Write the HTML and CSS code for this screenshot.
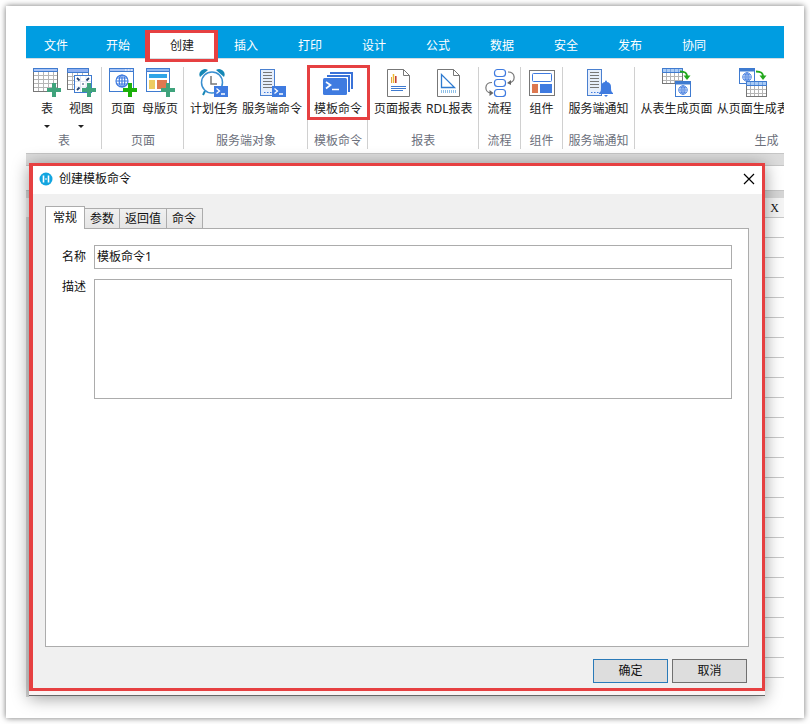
FILE: index.html
```html
<!DOCTYPE html>
<html lang="zh-CN">
<head>
  <meta charset="UTF-8" />
  <title>创建模板命令</title>
  <link rel="stylesheet" href="styles.css">
</head>
<body>
  <!-- shared icon parts -->
  <svg class="sprite" aria-hidden="true">
    <symbol id="plus" viewBox="0 0 14 14">
      <path d="M5 0h4v5h5v4H9v5H5V9H0V5h5z" fill="currentColor"/>
    </symbol>
    <symbol id="terminal" viewBox="0 0 14 11">
      <rect width="14" height="11" fill="#3f7be0"/>
      <path d="M2.500 2.500l3 2.500-3 2.500M7 8h4" fill="none" stroke="#fff" stroke-width="1.300"/>
    </symbol>
    <symbol id="globe" viewBox="0 0 14 14">
      <g fill="none" stroke="#3f7be0" stroke-width="1.200">
        <circle cx="7" cy="7" r="6"/>
        <ellipse cx="7" cy="7" rx="2.800" ry="6"/>
        <path d="M7 1v12M1 7h12M2 4h10M2 10h10"/>
      </g>
    </symbol>
    <symbol id="server" viewBox="0 0 16 28">
      <rect x=".5" y=".5" width="14" height="26" fill="#e6eefb" stroke="#4a80d0"/>
      <path d="M3 3.500h9M3 6.500h9M3 9.500h9M3 12.500h9M3 15.500h9M3 18.500h9" stroke="#777"/>
      <path d="M4 23.500h1.500M7 23.500h1.500M10 23.500h1.500" stroke="#3f7be0"/>
    </symbol>
    <symbol id="grid" viewBox="0 0 22 16">
      <rect x=".5" y=".5" width="20" height="15" fill="#fff" stroke="#777"/>
      <path d="M1 8.500h19M1 12.500h19M4.500 5v10M8.500 5v10M12.500 5v10M16.500 5v10" stroke="#b5b5b5"/>
      <path d="M.5.5h20v4H.5z" fill="#a9cbf5" stroke="#3f7bd0"/>
      <path d="M4.500 1v3M8.500 1v3M12.500 1v3M16.500 1v3" stroke="#3f7bd0" opacity=".5"/>
    </symbol>
    <symbol id="page" viewBox="0 0 17 17">
      <rect x=".5" y=".5" width="15" height="15" fill="#fff" stroke="#3f7bd0"/>
      <path d="M.5.5h15v3H.5z" fill="#3f7bd0"/>
      <use href="#globe" x="3" y="4" width="10" height="10"/>
    </symbol>
  </svg>

  <div class="card">
    <div class="app">
      <nav class="menu">
        <button class="menu-item file">文件</button>
        <button class="menu-item">开始</button>
        <button class="menu-item active">创建</button>
        <button class="menu-item">插入</button>
        <button class="menu-item">打印</button>
        <button class="menu-item">设计</button>
        <button class="menu-item">公式</button>
        <button class="menu-item">数据</button>
        <button class="menu-item">安全</button>
        <button class="menu-item">发布</button>
        <button class="menu-item">协同</button>
      </nav>

      <div class="ribbon">
        <section class="group">
          <div class="tools">
            <button class="tool">
              <svg class="icon green" viewBox="0 0 30 30">
                <rect x="1.500" y="1.500" width="24" height="23" fill="#fff" stroke="#777"/>
                <path d="M2 8.500h23M2 12.500h23M2 16.500h23M2 20.500h23M6.500 5v19M11.500 5v19M16.500 5v19M21.500 5v19" stroke="#b5b5b5"/>
                <path d="M1.500 1.500h24v3h-24z" fill="#a9c4f5" stroke="#3f7bd0"/>
                <use href="#plus" x="15" y="16" width="14" height="14"/>
              </svg>
              <span>表</span>
              <i class="caret"></i>
            </button>
            <button class="tool">
              <svg class="icon green" viewBox="0 0 30 30">
                <rect x="1.500" y="1.500" width="21" height="21" fill="#fff" stroke="#777"/>
                <path d="M2 9.500h20M2 13.500h20M2 17.500h20M6.500 5v17M11.500 5v17M16.500 5v17" stroke="#b5b5b5"/>
                <path d="M1.500 1.500h21v4h-21z" fill="#8fb0f0" stroke="#3f7bd0"/>
                <rect x="8.500" y="8.500" width="17" height="17" fill="#fff" stroke="#3f7bd0"/>
                <path d="M14.500 9v16M20 9v16M9 14.500h16M9 20h16" stroke="#dfe7f5"/>
                <path d="M11 11l2.500 2.500M23 11l-2.500 2.500M11 23l2.500-2.500M23 23l-2.500-2.500" fill="none" stroke="#24406e" stroke-width="1.800"/>
                <path d="M16 17h2" stroke="#24406e"/>
                <use href="#plus" x="16" y="16" width="14" height="14"/>
              </svg>
              <span>视图</span>
              <i class="caret"></i>
            </button>
          </div>
          <h3>表</h3>
        </section>

        <section class="group">
          <div class="tools">
            <button class="tool">
              <svg class="icon bright" viewBox="0 0 30 30">
                <rect x="1.500" y="1.500" width="24" height="23" fill="#fff" stroke="#3f7bd0"/>
                <path d="M1.500 1.500h24v3h-24z" fill="#a9c4f5" stroke="#3f7bd0"/>
                <path d="M17 3h1.500M20 3h1.500M23 3h1.500" stroke="#fff"/>
                <use href="#globe" x="7" y="7" width="14" height="14"/>
                <use href="#plus" x="15" y="16" width="14" height="14"/>
              </svg>
              <span>页面</span>
            </button>
            <button class="tool">
              <svg class="icon green" viewBox="0 0 30 30">
                <rect x="1.500" y="1.500" width="23" height="23" fill="#fff" stroke="#3f7bd0"/>
                <path d="M1.500 1.500h23v3h-23z" fill="#8fb8f0" stroke="#3f7bd0"/>
                <rect x="4" y="7" width="18" height="4" fill="#2fa4e7"/>
                <rect x="4" y="13" width="6" height="9" fill="#edcb62"/>
                <rect x="12" y="13" width="10" height="9" fill="#dd7850"/>
                <use href="#plus" x="16" y="16" width="14" height="14"/>
              </svg>
              <span>母版页</span>
            </button>
          </div>
          <h3>页面</h3>
        </section>

        <section class="group">
          <div class="tools">
            <button class="tool">
              <svg class="icon" viewBox="0 0 30 30">
                <path d="M6 24l-2 4" stroke="#1587b5" stroke-width="2"/>
                <circle cx="13" cy="15.500" r="10.500" fill="#fff" stroke="#3a8fd0" stroke-width="1.500"/>
                <path d="M1 10a5.500 5.500 0 0 1 8-7zM25 10a5.500 5.500 0 0 0-8-7z" fill="#1587b5"/>
                <path d="M12 9v8h6" fill="none" stroke="#777" stroke-width="1.500"/>
                <use href="#terminal" x="15" y="19" width="14" height="11"/>
              </svg>
              <span>计划任务</span>
            </button>
            <button class="tool">
              <svg class="icon" viewBox="0 0 30 30">
                <use href="#server" x="3" y="2" width="16" height="28"/>
                <use href="#terminal" x="15" y="19" width="14" height="11"/>
              </svg>
              <span>服务端命令</span>
            </button>
          </div>
          <h3>服务端对象</h3>
        </section>

        <section class="group">
          <div class="tools">
            <button class="tool marked">
              <svg class="icon" viewBox="0 0 30 30">
                <path d="M7 6h22v16M4 9h22v16" fill="none" stroke="#3a72d8" stroke-width="2"/>
                <rect x="0" y="11" width="24" height="17" rx="1.500" fill="#3f7be0"/>
                <path d="M3 15l4.500 3L3 21.500M9 22.500h7" fill="none" stroke="#fff" stroke-width="1.700"/>
              </svg>
              <span>模板命令</span>
            </button>
          </div>
          <h3>模板命令</h3>
        </section>

        <section class="group">
          <div class="tools">
            <button class="tool">
              <svg class="icon" viewBox="0 0 30 30">
                <path d="M4.500 2.500h16l6 6v21h-22zM20.500 2.500v6h6" fill="#fff" stroke="#777"/>
                <path d="M8.500 10v6" stroke="#e8a33c"/>
                <path d="M10.500 7v9" stroke="#edb830" stroke-width="1.500"/>
                <path d="M12.800 9v7" stroke="#c0392b" stroke-width="1.500"/>
                <path d="M8 19.500h15M8 21.500h15M8 23.500h12" stroke="#3f7bd0" stroke-width="1.200"/>
              </svg>
              <span>页面报表</span>
            </button>
            <button class="tool">
              <svg class="icon" viewBox="0 0 30 30">
                <path d="M3.500 2.500h16l6 6v21h-22zM19.500 2.500v6h6" fill="#fff" stroke="#777"/>
                <path d="M7.500 7.500v13h13z" fill="none" stroke="#2f7bd0" stroke-width="1.300"/>
                <path d="M7 24.500h16" stroke="#8fc0e8" stroke-width="3" stroke-dasharray="1 1"/>
              </svg>
              <span>RDL报表</span>
            </button>
          </div>
          <h3>报表</h3>
        </section>

        <section class="group">
          <div class="tools">
            <button class="tool">
              <svg class="icon" viewBox="0 0 30 30">
                <g fill="#fff" stroke="#3f7be0" stroke-width="1.200">
                  <rect x="9.500" y="2.500" width="11" height="7" rx="3"/>
                  <rect x="9.500" y="12.500" width="11" height="7" rx="3"/>
                  <rect x="9.500" y="22.500" width="11" height="7" rx="3"/>
                </g>
                <path d="M23 5c8 0 8 10 1 11M7 15.500c-8 0-8 10-1 10.500" fill="none" stroke="#777" stroke-width="1.200"/>
                <path d="M22 16l4-3v5zM8.500 26l-4-3v6z" fill="#666"/>
              </svg>
              <span>流程</span>
            </button>
          </div>
          <h3>流程</h3>
        </section>

        <section class="group">
          <div class="tools">
            <button class="tool">
              <svg class="icon" viewBox="0 0 30 30">
                <rect x="2.500" y="3.500" width="25" height="25" fill="#fff" stroke="#777"/>
                <rect x="5.500" y="6.500" width="19" height="8" rx="1" fill="#fff" stroke="#3f7be0"/>
                <rect x="5" y="17" width="6" height="9" fill="#dd7850"/>
                <rect x="13" y="17" width="12" height="9" fill="#3f7be0"/>
              </svg>
              <span>组件</span>
            </button>
          </div>
          <h3>组件</h3>
        </section>

        <section class="group">
          <div class="tools">
            <button class="tool">
              <svg class="icon" viewBox="0 0 30 30">
                <use href="#server" x="3" y="2" width="16" height="28"/>
                <path d="M15 26c2-1 2-3 2-6a5 5 0 0 1 4-5c0-2 2-2 2 0a5 5 0 0 1 4 5c0 3 0 5 2 6v1H15z" fill="#3f7be0"/>
                <path d="M20 28h4l-2 2z" fill="#3f7be0"/>
              </svg>
              <span>服务端通知</span>
            </button>
          </div>
          <h3>服务端通知</h3>
        </section>

        <section class="group wide">
          <div class="tools">
            <button class="tool">
              <svg class="icon" viewBox="0 0 30 30">
                <use href="#grid" x="0" y="1" width="22" height="16"/>
                <use href="#page" x="13" y="14" width="17" height="17"/>
                <path d="M18 4.500c5 0 7 1 7 5" fill="none" stroke="#22a81c" stroke-width="2"/>
                <path d="M21.500 8.500h7L25 13z" fill="#22a81c"/>
              </svg>
              <span>从表生成页面</span>
            </button>
            <button class="tool">
              <svg class="icon" viewBox="0 0 30 30">
                <use href="#page" x="1" y="1" width="17" height="17"/>
                <use href="#grid" x="8" y="14" width="22" height="16"/>
                <path d="M18 4.500c5 0 7 1 7 5" fill="none" stroke="#22a81c" stroke-width="2"/>
                <path d="M21.500 8.500h7L25 13z" fill="#22a81c"/>
              </svg>
              <span>从页面生成表</span>
            </button>
          </div>
          <h3>生成</h3>
        </section>
      </div>

      <main class="workspace">
        <div class="formula-bar"></div>
        <div class="column-head">X</div>
        <div class="cells"></div>

        <form class="dialog" role="dialog" aria-labelledby="dialogTitle">
          <div class="frame">
            <header class="title-bar">
              <svg class="logo" viewBox="0 0 14 14">
                <circle cx="7" cy="7" r="6.500" fill="#12a5e0"/>
                <path d="M4.500 3.500v7M9.500 3.500v7" stroke="#fff" stroke-width="1.600"/>
                <path d="M6 7h2" stroke="#fff"/>
              </svg>
              <h2 id="dialogTitle">创建模板命令</h2>
              <button type="button" class="close" aria-label="关闭">
                <svg viewBox="0 0 12 12"><path d="M1 1l10 10M11 1L1 11" stroke="#000" stroke-width="1.200"/></svg>
              </button>
            </header>
            <div class="content">
              <div class="tabs">
                <button type="button" class="tab selected">常规</button>
                <button type="button" class="tab">参数</button>
                <button type="button" class="tab">返回值</button>
                <button type="button" class="tab">命令</button>
              </div>
              <div class="panel">
                <label for="name">名称</label>
                <input type="text" id="name" value="模板命令1" />
                <label for="description">描述</label>
                <textarea id="description"></textarea>
              </div>
              <footer class="buttons">
                <button type="button" class="btn primary">确定</button>
                <button type="button" class="btn">取消</button>
              </footer>
            </div>
          </div>
        </form>
      </main>
    </div>
  </div>
</body>
</html>
```

FILE: styles.css
```css
* {
  box-sizing: border-box;
}

body {
  margin: 0;
  padding: 6px;
  min-height: 100vh;
  display: flex;
  background: #fff;
  font-family: "Noto Sans", "Noto Sans CJK SC", sans-serif;
  font-size: 12px;
  line-height: 16px;
  color: #111;
}

button,
input,
textarea {
  font: inherit;
  color: inherit;
}

button {
  padding: 0;
  border: none;
  background: none;
}

h2,
h3 {
  margin: 0;
  font-size: 12px;
  font-weight: normal;
}

.sprite {
  position: absolute;
  width: 0;
  height: 0;
}

.card {
  flex: 1;
  min-width: 0;
  display: flex;
  padding: 20px 20px 21px;
  background: #fff;
  box-shadow: 0 0 6px rgba(0, 0, 0, 0.55);
}

.app {
  flex: 1;
  min-width: 0;
  display: flex;
  flex-direction: column;
}

/* top menu */
.menu {
  display: flex;
  height: 32px;
  background: #009de1;
}

.menu-item {
  width: 64px;
  padding-top: 8px;
  color: #fff;
}

.menu-item.file {
  width: 60px;
}

.menu-item.active {
  position: relative;
  background: linear-gradient(#009de1 5px, #fff 5px);
  color: #222;
}

.menu-item.active::after {
  content: "";
  position: absolute;
  inset: 4px -4px -4px -5px;
  border: 4px solid #e64041;
  border-width: 3px 4px 3px 5px;
}

/* ribbon */
.ribbon {
  display: flex;
  padding: 8px 0 4px;
  border-top: 1px solid #d5dde2;
  border-bottom: 1px solid #c6c6c6;
  overflow: hidden;
}

.group {
  flex: none;
  height: 82px;
  padding: 0 5px 0 6px;
  display: flex;
  flex-direction: column;
  justify-content: space-between;
  border-right: 1px solid #d0d0d0;
}

.group.wide {
  width: 264px;
}

.group h3 {
  text-align: center;
  color: #6b6f7b;
}

.tools {
  display: flex;
  align-items: flex-start;
  gap: 4px;
}

.tool {
  position: relative;
  min-width: 30px;
  display: flex;
  flex-direction: column;
  align-items: center;
  white-space: nowrap;
  color: #222;
}

.tool.marked::after {
  content: "";
  position: absolute;
  inset: -2px -8px -3px -7px;
  border: 3px solid #e64041;
}

.icon {
  width: 30px;
  height: 30px;
  margin-bottom: 4px;
}

.icon.green {
  color: #3fa37c;
}

.icon.bright {
  color: #1bb00a;
}

.caret {
  margin-top: 8px;
  border: 3px solid transparent;
  border-top-color: #222;
  border-bottom: none;
}

/* sheet behind the dialog */
.workspace {
  position: relative;
  flex: 1;
  display: flex;
  flex-direction: column;
  padding-top: 11px;
  background: #dcdcdc;
}

.formula-bar {
  height: 26px;
  background: #fff;
  border: 1px solid #c6c6c6;
  border-width: 1px 0;
}

.column-head {
  height: 26px;
  padding: 2px 5px 0 0;
  border-top: 7px solid #d6d6d6;
  background: #f5f5f5;
  font-family: "Liberation Serif", serif;
  text-align: right;
}

.cells {
  flex: 1;
  border-left: 3px solid #d6d6d6;
  background: repeating-linear-gradient(#c8c8c8 0 1px, #fff 1px 20px);
}

/* dialog */
.dialog {
  position: absolute;
  inset: 9px 19px 1px 3px;
  padding-bottom: 4px;
  display: flex;
  background: #fbf3f3;
  border-bottom: 1px solid #666;
  box-shadow: 0 2px 16px rgba(0, 0, 0, 0.4);
}

.frame {
  flex: 1;
  min-width: 0;
  display: flex;
  flex-direction: column;
  border: 3px solid #e64041;
  border-left-width: 4px;
}

.title-bar {
  display: flex;
  align-items: center;
  gap: 6px;
  height: 28px;
  padding: 0 7px 3px 6px;
  background: #fff;
}

.logo {
  width: 14px;
  height: 14px;
}

.title-bar h2 {
  flex: 1;
}

.close {
  width: 12px;
  height: 12px;
}

.close svg {
  display: block;
}

.content {
  flex: 1;
  display: flex;
  flex-direction: column;
  padding: 12px 13px 5px 12px;
  background: #f0f0f0;
}

.tabs {
  display: flex;
  align-items: flex-end;
}

.tab {
  height: 20px;
  padding: 0 5px;
  border: 1px solid #acacac;
  border-left: none;
  border-bottom: none;
  background: linear-gradient(#f0f0f0, #e5e5e5);
}

.tab:last-child {
  padding: 0 6px 0 5px;
}

.tab.selected {
  position: relative;
  height: 23px;
  margin-bottom: -1px;
  padding: 0 7px;
  border-left: 1px solid #acacac;
  background: #fff;
}

.panel {
  flex: 1;
  display: grid;
  grid-template-columns: 32px 1fr;
  grid-template-rows: 24px 120px;
  gap: 10px 0;
  padding: 16px;
  border: 1px solid #acacac;
  background: #fff;
}

.panel label {
  padding-top: 4px;
}

.panel label:last-of-type {
  padding-top: 0;
}

.panel input,
.panel textarea {
  width: 100%;
  margin: 0;
  padding: 0 2px;
  border: 1px solid #acacac;
  border-radius: 0;
  background: #fff;
  outline: none;
  resize: none;
}

.buttons {
  display: flex;
  justify-content: flex-end;
  gap: 4px;
  padding: 12px 2px 0 0;
}

.btn {
  width: 75px;
  height: 24px;
  border: 1px solid #707070;
  background: #ddd;
}

.btn.primary {
  border-color: #2a7ab8;
}
```
